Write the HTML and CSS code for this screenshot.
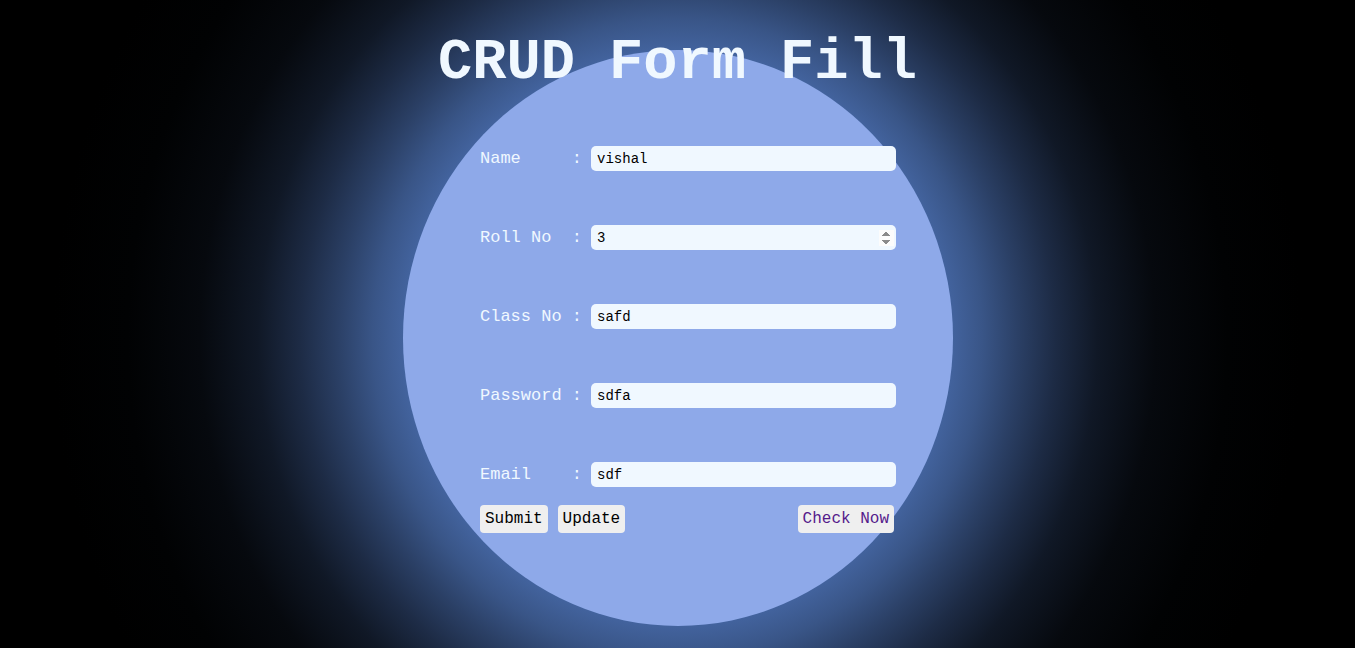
FILE: index.html
```html
<!DOCTYPE html>
<html lang="en">
<head>
<meta charset="utf-8">
<title>CRUD Form Fill</title>
<link rel="stylesheet" href="styles.css">
</head>
<body>
<h1 class="title">CRUD Form Fill</h1>
<div class="orb">
  <form class="crud-form">
    <div class="row">
      <label class="label" for="name">Name     :</label>
      <input class="field" id="name" type="text" value="vishal">
    </div>
    <div class="row">
      <label class="label" for="roll">Roll No  :</label>
      <input class="field" id="roll" type="number" value="3">
    </div>
    <div class="row">
      <label class="label" for="cls">Class No :</label>
      <input class="field" id="cls" type="text" value="safd">
    </div>
    <div class="row">
      <label class="label" for="pwd">Password :</label>
      <input class="field" id="pwd" type="text" value="sdfa">
    </div>
    <div class="row">
      <label class="label" for="email">Email    :</label>
      <input class="field" id="email" type="text" value="sdf">
    </div>
    <div class="actions">
      <div class="group">
        <button class="btn" type="button">Submit</button>
        <button class="btn" type="button">Update</button>
      </div>
      <button class="btn btn-link" type="button">Check Now</button>
    </div>
  </form>
</div>
</body>
</html>
```
FILE: styles.css
```css
html, body {
  margin: 0;
  padding: 0;
  height: 100%;
  overflow: hidden;
}
body {
  background-color: #000;
  background-image: radial-gradient(
    ellipse 625px 655px at 50% 338px,
    rgb(68, 101, 161) 270px,
    rgb(57, 85, 135) 305px,
    rgb(43, 64, 102) 340px,
    rgb(29, 43, 69) 378px,
    rgb(16, 24, 38) 420px,
    rgb(6, 9, 14) 478px,
    rgb(1, 2, 3) 550px,
    rgb(0, 0, 0) 625px
  );
  font-family: "Liberation Mono", "Courier New", monospace;
}
.title {
  margin: 34px 0 0;
  font-size: 57px;
  line-height: 58px;
  font-weight: bold;
  color: #f0f8ff;
  text-align: center;
}
.orb {
  width: 550px;
  height: 576px;
  margin: -42px auto 0;
  box-sizing: border-box;
  padding: 96px 56.5px 0 77.5px;
  border-radius: 50%;
  background: #8ea9e9;
}
.crud-form {
  display: flex;
  flex-direction: column;
  gap: 54px;
}
.row {
  display: flex;
  align-items: center;
  gap: 9px;
}
.label {
  white-space: pre;
  font-size: 17px;
  color: #f0f8ff;
}
.field {
  flex: 1;
  height: 25px;
  box-sizing: border-box;
  border: none;
  border-radius: 5px;
  padding: 0 2px 0 6px;
  background: #f0f8ff;
  color: #000;
  font-family: "Liberation Mono", "Courier New", monospace;
  font-size: 14px;
  outline: none;
}
.field::-webkit-inner-spin-button {
  opacity: 1;
  -webkit-appearance: inner-spin-button;
}
.actions {
  display: flex;
  justify-content: space-between;
  margin-top: -36px;
}
.group {
  display: flex;
  gap: 10px;
}
.btn {
  border: none;
  border-radius: 4px;
  background: #efefef;
  color: #000;
  font-family: "Liberation Mono", "Courier New", monospace;
  font-size: 16px;
  padding: 5px 5px;
  line-height: normal;
}
.btn-link {
  color: #551a8b;
  margin-right: 2px;
}
```
